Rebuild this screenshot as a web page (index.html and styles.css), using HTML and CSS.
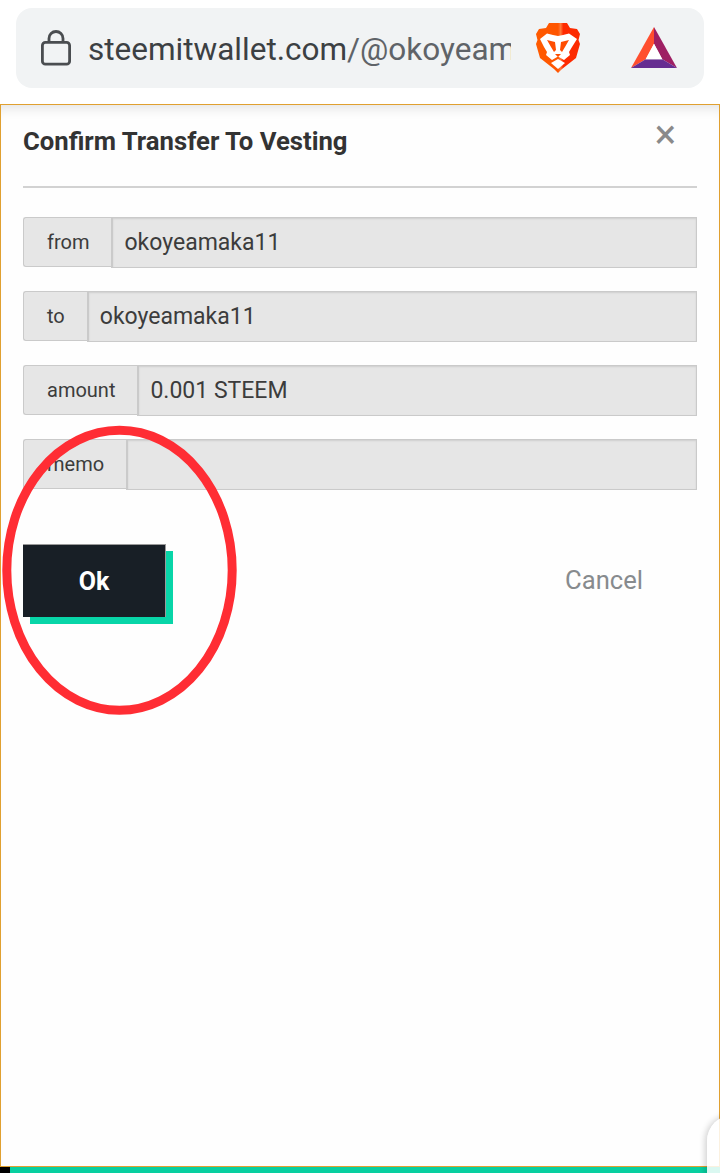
FILE: index.html
```html
<!DOCTYPE html>
<html lang="en">
<head>
    <meta charset="UTF-8">
    <meta name="viewport" content="width=device-width, initial-scale=1.0">
    <title>Confirm Transfer To Vesting</title>
    <link rel="stylesheet" href="styles.css">
</head>
<body>
<div class="toolbar">
    <div class="urlbar">
        <svg class="lock" width="32" height="38" viewBox="0 0 32 38">
            <path d="M9 14V9.5a7 7 0 0 1 14 0V14" fill="none" stroke="#4a4d50" stroke-width="2.8"/>
            <rect x="2.4" y="13.4" width="27.2" height="21.8" rx="3" fill="none" stroke="#4a4d50" stroke-width="2.8"/>
        </svg>
        <div class="url"><span class="host">steemitwallet.com</span>/@okoyeamaka11</div>
        <svg class="brave" width="44" height="51" viewBox="0 0 44 51">
            <defs>
                <linearGradient id="braveFill" x1="0" y1="0" x2="1" y2="0">
                    <stop offset="0" stop-color="#ff5a00"/>
                    <stop offset="0.5" stop-color="#ff5500"/>
                    <stop offset="0.56" stop-color="#ff7a3c"/>
                    <stop offset="0.62" stop-color="#ff2a00"/>
                    <stop offset="1" stop-color="#fb2a00"/>
                </linearGradient>
            </defs>
            <path d="M13 1H31L34 6 41 7 44 12 42.5 18 44 22 40 36 26 47 22 51 18 47 4 36 0 22 1.5 18 0 12 3 7 10 6Z" fill="url(#braveFill)"/>
            <path d="M4 17 11 11.5 17 13 22 14 27 13 33 11.5 41 17 36 25 33 30 34 33 28 38 22 34.5 16 38 10 33 11 30 8 25Z" fill="#fff"/>
            <path d="M11 18 19 20 20 28 18 30 15 25ZM33 18 25 20 24 28 26 30 29 25ZM19 32H25L22 35Z" fill="#ff4d00"/>
            <path d="M15 41 22 37 29 41 22 47Z" fill="#fff"/>
        </svg>
        <svg class="bat" width="46" height="41" viewBox="0 0 46 41">
            <path d="M23 0V16.7L14.7 32.3 0 41Z" fill="#ff4e2e"/>
            <path d="M23 0 46 41 31.3 32.3 23 16.7Z" fill="#9e1f63"/>
            <path d="M0 41 14.7 32.3H31.3L46 41Z" fill="#662d91"/>
            <path d="M23 16.7 31.3 32.3H14.7Z" fill="#fff"/>
        </svg>
    </div>
</div>

<div class="modal">
    <div class="close">&times;</div>
    <h1 class="title">Confirm Transfer To Vesting</h1>
    <hr class="divider">
    <div class="field">
        <span class="field-label">from</span>
        <input class="field-input" type="text" value="okoyeamaka11" readonly>
    </div>
    <div class="field">
        <span class="field-label">to</span>
        <input class="field-input" type="text" value="okoyeamaka11" readonly>
    </div>
    <div class="field">
        <span class="field-label">amount</span>
        <input class="field-input" type="text" value="0.001 STEEM" readonly>
    </div>
    <div class="field">
        <span class="field-label">memo</span>
        <input class="field-input" type="text" readonly>
    </div>
    <div class="actions">
        <button class="ok">Ok</button>
        <button class="cancel">Cancel</button>
    </div>
</div>

<div class="bottom-strip"><div class="strip-black"></div></div>
<div class="corner-tab"></div>

<svg class="circle-mark" width="240" height="294" viewBox="0 0 240 294">
    <ellipse cx="118.5" cy="145.3" rx="112.7" ry="140" fill="none" stroke="#ff2d34" stroke-width="9"/>
</svg>
</body>
</html>
```

FILE: styles.css
```css
* { box-sizing: border-box; }
html, body { height: 100%; }
body {
    margin: 0;
    background: #fff;
    color: #333;
    font-family: Roboto, "Liberation Sans", sans-serif;
    overflow: hidden;
    position: relative;
}
.toolbar {
    height: 104px;
    padding: 8px 16px 16px;
}
.urlbar {
    height: 80px;
    background: #f1f3f4;
    border-radius: 16px;
    display: flex;
    align-items: center;
    padding-left: 24px;
}
.lock { flex: none; margin-right: 16px; }
.url {
    width: 423px;
    padding-top: 2px;
    overflow: hidden;
    white-space: nowrap;
    font-size: 31.5px;
    color: #5f6368;
}
.host { color: #3c4043; }
.brave { flex: none; margin-left: 25px; margin-top: -1px; }
.bat { flex: none; margin-left: 51px; margin-top: -1px; }

.modal {
    height: 1063px;
    border: 1px solid #e0a030;
    padding: 0 22px;
    background: #fefefe;
    box-shadow: inset 0 12px 14px -10px rgba(0, 0, 0, 0.13);
    position: relative;
}
.title {
    margin: 0;
    padding-top: 21px;
    font-size: 25.7px;
    line-height: 30px;
    font-weight: 700;
    color: #333;
}
.close {
    position: absolute;
    top: 8px;
    right: 43px;
    font-size: 40px;
    line-height: 44px;
    color: #8a8a8a;
}
.divider {
    margin: 30px 0 29px;
    border: 0;
    border-top: 2px solid #d2d2d2;
}
.field {
    display: flex;
    height: 50px;
    margin-bottom: 24px;
    font-size: 20px;
}
.field-label {
    display: flex;
    align-items: center;
    padding: 0 22px 1px 23px;
    background: #e6e6e6;
    border: 1px solid #cacaca;
    border-right: 0;
    border-radius: 3px 0 0 3px;
    color: #3c3c3c;
}
.field-input {
    flex: 1;
    min-width: 0;
    height: 51px;
    padding: 0 11px;
    background: #e6e6e6;
    border: 1px solid #cacaca;
    border-left-width: 2px;
    box-shadow: inset 0 1px 2px rgba(10, 10, 10, 0.1);
    font-family: inherit;
    font-size: 23px;
    color: #3c3c3c;
    outline: none;
}
.actions {
    display: flex;
    align-items: flex-start;
    justify-content: space-between;
    margin-top: 55px;
}
button {
    border: 0;
    font-family: inherit;
    cursor: pointer;
}
.ok {
    width: 143px;
    height: 73px;
    background: #181f26;
    border: 1px solid #9a9a9a;
    border-width: 1px 1px 0 0;
    box-shadow: 7px 7px 0 #08d5a8;
    color: #fff;
    font-size: 25px;
    font-weight: 700;
}
.cancel {
    margin: 16px 54px 0 0;
    padding: 0;
    background: none;
    color: #878b8e;
    font-size: 25.6px;
    line-height: 40px;
}

.bottom-strip {
    height: 6px;
    background: #08cfa0;
}
.strip-black {
    width: 10px;
    height: 6px;
    background: #000;
}
.corner-tab {
    position: absolute;
    left: 707px;
    top: 1115px;
    width: 40px;
    height: 70px;
    background: rgba(255, 255, 255, 0.85);
    border-radius: 26px 0 0 0;
    box-shadow: -2px 0 6px rgba(0, 0, 0, 0.18);
}
.circle-mark {
    position: absolute;
    left: 1px;
    top: 425px;
}
```
